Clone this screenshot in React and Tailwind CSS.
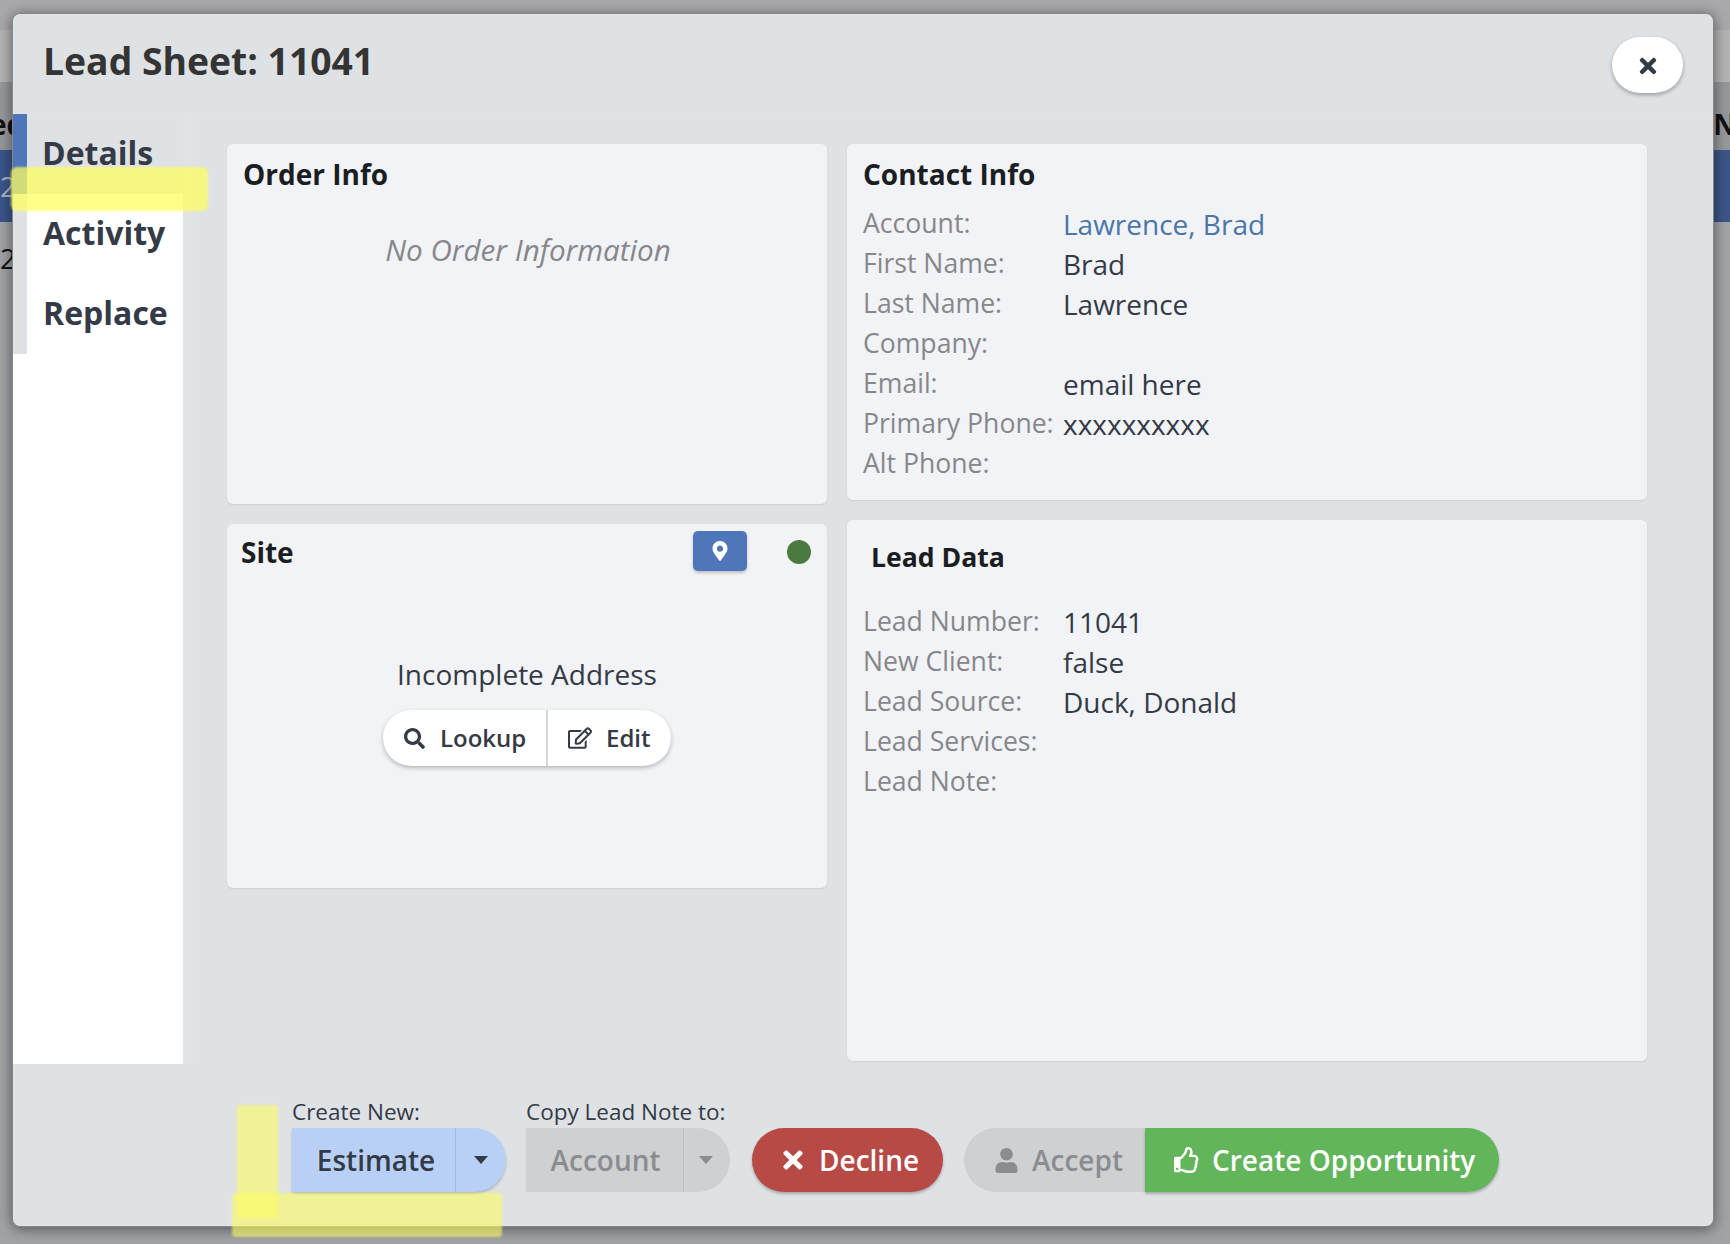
import { FaTimes, FaSearch, FaRegEdit, FaMapMarkerAlt, FaRegThumbsUp, FaUser } from "react-icons/fa";

const contactRows = [
  ["Account:", "Lawrence, Brad"],
  ["First Name:", "Brad"],
  ["Last Name:", "Lawrence"],
  ["Company:", ""],
  ["Email:", "email here"],
  ["Primary Phone:", "xxxxxxxxxx"],
  ["Alt Phone:", ""],
];

const leadRows = [
  ["Lead Number:", "11041"],
  ["New Client:", "false"],
  ["Lead Source:", "Duck, Donald"],
  ["Lead Services:", ""],
  ["Lead Note:", ""],
];

function InfoRows({ rows }) {
  return (
    <div className="flex flex-col">
      {rows.map(([label, value]) => (
        <div key={label} className="flex h-[40px] leading-[40px]">
          <span className="w-[200px] shrink-0 text-[26.6px] text-[#87878b]">{label}</span>
          <span className={label === "Account:" ? "mt-px text-[28px] text-[#4a76a8]" : "mt-px text-[28px] text-[#343a46]"}>{value}</span>
        </div>
      ))}
    </div>
  );
}

function Caret({ color }) {
  return <span className={`h-0 w-0 border-x-[7px] border-t-[8px] border-x-transparent ${color}`} />;
}

export default function App() {
  return (
    <div className="relative h-[1244px] w-[1730px] overflow-hidden bg-[#a9a9ad] pl-[12px] pt-[13px] font-['Open_Sans',sans-serif] text-[#343a46]">
      {/* page behind the modal */}
      <div className="absolute inset-x-0 top-[30px] h-[52px] bg-[#b4b4b5]" />
      <div className="absolute inset-x-0 top-[82px] flex h-[68px] items-center justify-between bg-[#97989b] pt-[15px] text-[28px] font-bold text-[#111]">
        <span className="-ml-[10px]">ed</span>
        <span className="-mr-[6px]">N</span>
      </div>
      <div className="absolute inset-x-0 top-[150px] flex h-[72px] items-center bg-[#3b5689] text-[28px] text-[#a9b4c9]">2</div>
      <div className="absolute inset-x-0 top-[222px] flex h-[1022px] flex-col bg-[#a1a3a7] text-[28px] text-[#111]">
        <span className="mt-[15px]">2</span>
      </div>

      {/* modal */}
      <div className="relative flex h-[1214px] w-[1702px] flex-col rounded-[8px] border border-[#87888c] bg-[#dfe2e5] shadow-[0_2px_14px_rgba(0,0,0,0.5)]">
        <div className="flex h-[100px] shrink-0 items-start justify-between border-b border-[#e4e4e4] pl-[30px] pr-[30px]">
          <h1 className="mt-[22px] text-[37.3px] font-bold leading-[50px] text-[#343434]">Lead Sheet: 11041</h1>
          <button className="mt-[23px] flex h-[56px] w-[71px] items-center justify-center rounded-full bg-white pt-[2px] shadow-[0_2px_4px_rgba(0,0,0,0.3)]">
            <FaTimes size={24} className="text-[#343a46]" />
          </button>
        </div>

        <div className="flex h-[950px] shrink-0">
          {/* sidebar */}
          <div className="flex h-[950px] w-[170px] shrink-0 flex-col bg-white">
            <div className="flex h-[240px] w-full flex-col">
              <div className="flex h-[80px] bg-[#dfe2e5]">
                <div className="h-full w-[14px] bg-[#4f76b8]" />
                <div className="pl-[15px] pt-[17px] text-[32px] font-bold leading-[44px]">Details</div>
              </div>
              <div className="flex h-[80px]">
                <div className="h-full w-[14px] bg-[#dfe2e5]" />
                <div className="pl-[16px] pt-[17px] text-[32px] font-bold leading-[44px]">Activity</div>
              </div>
              <div className="flex h-[80px]">
                <div className="h-full w-[14px] bg-[#dfe2e5]" />
                <div className="pl-[16px] pt-[17px] text-[32px] font-bold leading-[44px]">Replace</div>
              </div>
            </div>
          </div>
          <div className="w-[10px] shrink-0 bg-[#e1e3e5]" />

          {/* main cards */}
          <div className="grid grid-cols-[600px_800px] gap-x-[20px] pl-[34px] pt-[30px]">
            <div className="flex flex-col gap-[20px]">
              <section className="h-[360px] rounded-[6px] bg-[#f1f3f7] px-[16px] shadow-[0_1px_2px_rgba(0,0,0,0.08)]">
                <h2 className="pt-[11px] text-[28px] font-bold leading-[38px] text-[#1a1d21]">Order Info</h2>
                <p className="mt-[37px] pl-[2px] text-center text-[29.6px] italic leading-[40px] text-[#87878b]">No Order Information</p>
              </section>
              <section className="flex h-[364px] flex-col rounded-[6px] bg-[#f1f3f7] shadow-[0_1px_2px_rgba(0,0,0,0.08)]">
                <div className="flex h-[54px] items-center pl-[14px] pr-[16px]">
                  <h2 className="mt-px flex-1 text-[28px] font-bold text-[#1a1d21]">Site</h2>
                  <button className="mr-[40px] flex h-[40px] w-[54px] items-center justify-center rounded-[5px] bg-[#4f76b8] shadow-[0_2px_3px_rgba(0,0,0,0.2)]">
                    <FaMapMarkerAlt size={20} className="text-white" />
                  </button>
                  <span className="mt-px h-[24px] w-[24px] rounded-full bg-[#4a7a40]" />
                </div>
                <div className="mt-[76px] flex flex-col items-center">
                  <p className="text-[28px] leading-[40px]">Incomplete Address</p>
                  <div className="mt-[16px] flex h-[56px] items-center rounded-full bg-white text-[24px] font-semibold shadow-[0_2px_4px_rgba(0,0,0,0.25)]">
                    <span className="flex h-full w-[165px] items-center gap-[15px] border-r-2 border-[#d8d8d8] pl-[21px]">
                      <FaSearch size={21} />Lookup
                    </span>
                    <span className="flex h-full w-[123px] items-center gap-[14px] pl-[20px]">
                      <FaRegEdit size={24} />Edit
                    </span>
                  </div>
                </div>
              </section>
            </div>

            <div className="flex flex-col gap-[20px]">
              <section className="h-[356px] rounded-[6px] bg-[#f1f3f7] px-[16px] shadow-[0_1px_2px_rgba(0,0,0,0.08)]">
                <h2 className="pt-[11px] text-[28px] font-bold leading-[38px] text-[#1a1d21]">Contact Info</h2>
                <div className="mt-[10px]"><InfoRows rows={contactRows} /></div>
              </section>
              <section className="h-[541px] rounded-[6px] bg-[#f1f3f7] px-[16px] shadow-[0_1px_2px_rgba(0,0,0,0.08)]">
                <h2 className="pl-[8px] pt-[18px] text-[26.6px] font-bold leading-[38px] text-[#1a1d21]">Lead Data</h2>
                <div className="mt-[25px]"><InfoRows rows={leadRows} /></div>
              </section>
            </div>
          </div>
        </div>

        {/* footer actions */}
        <div className="flex items-end pl-[279px] pt-[31px]">
          <div className="mr-[20px] flex flex-col">
            <span className="text-[22.5px] leading-[33px]">Create New:</span>
            <div className="flex h-[64px] w-[214px] overflow-hidden rounded-r-full bg-[#b8d0f5] shadow-[0_2px_3px_rgba(0,0,0,0.2)]">
              <span className="flex w-[164px] items-center justify-center border-r border-[#a4b8d8] pl-[5px] text-[28px] font-semibold">Estimate</span>
              <span className="flex flex-1 items-center justify-center"><Caret color="border-t-[#343a46]" /></span>
            </div>
          </div>
          <div className="mr-[22px] flex flex-col">
            <span className="text-[22.5px] leading-[33px]">Copy Lead Note to:</span>
            <div className="flex h-[64px] w-[204px] overflow-hidden rounded-r-full bg-[#cfd0d2]">
              <span className="flex w-[158px] items-center justify-center border-r border-[#bfc0c2] pl-[2px] text-[28px] font-semibold text-[#8b8c90]">Account</span>
              <span className="flex flex-1 items-center justify-center pr-[2px]"><Caret color="border-t-[#8b8c90]" /></span>
            </div>
          </div>
          <button className="mr-[21px] flex h-[64px] w-[191px] items-center gap-[12px] rounded-full bg-[#b84a45] pl-[27px] text-[28px] font-semibold text-white shadow-[0_2px_3px_rgba(0,0,0,0.25)]">
            <FaTimes size={28} />Decline
          </button>
          <div className="flex h-[64px]">
            <span className="flex w-[181px] items-center gap-[13px] rounded-l-full bg-[#cfd0d2] pl-[30px] text-[28px] font-semibold text-[#8b8c90]">
              <FaUser size={25} />Accept
            </span>
            <span className="flex w-[354px] items-center gap-[12px] rounded-r-full bg-[#62b55a] pl-[29px] text-[28px] font-semibold text-white shadow-[0_2px_3px_rgba(0,0,0,0.25)]">
              <FaRegThumbsUp size={26} />Create Opportunity
            </span>
          </div>
        </div>
      </div>

      {/* yellow highlighter marks */}
      <div className="absolute left-[11px] top-[167px] h-[44px] w-[197px] rounded-[6px] bg-[#fdfd60]/75 blur-[1px]" />
      <div className="absolute left-[237px] top-[1105px] h-[113px] w-[41px] rounded-[3px] bg-[#fdfd60]/60 blur-[1px]" />
      <div className="absolute left-[232px] top-[1193px] h-[44px] w-[270px] rounded-[4px] bg-[#fdfd60]/60 blur-[1px]" />
    </div>
  );
}
